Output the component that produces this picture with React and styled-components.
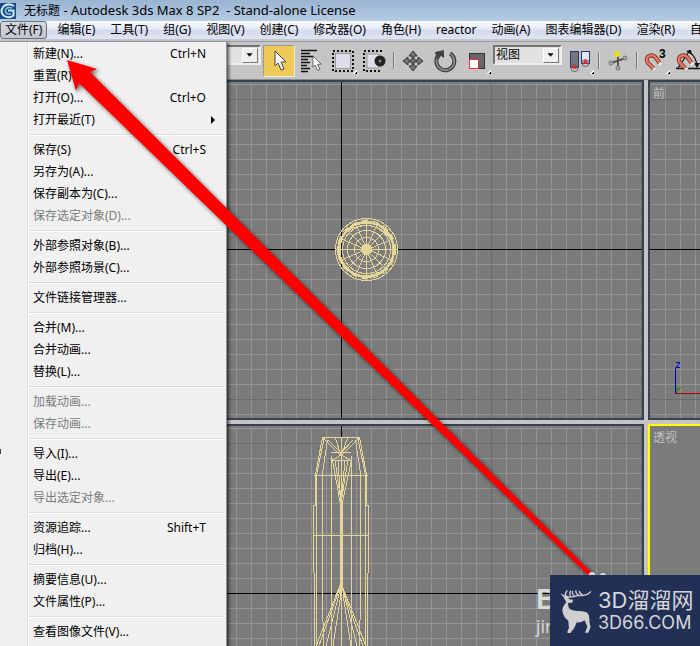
import styled, { createGlobalStyle, css } from "styled-components";

const GlobalStyle = createGlobalStyle`
  * {
    box-sizing: border-box;
  }

  body {
    margin: 0;
    overflow: hidden;
    background: #c5c5c5;
    color: #000;
    font: 12px/16px "Noto Sans", "Noto Sans CJK SC", sans-serif;
  }

  button,
  select {
    padding: 0;
    border: 0;
    background: none;
    color: inherit;
    font: inherit;
  }
`;

let Window = styled.div`
  position: relative;
  display: flex;
  flex-direction: column;
  height: 100vh;
  overflow: hidden;
`;

let TitleBar = styled.header`
  display: flex;
  flex: none;
  align-items: center;
  gap: 8px;
  height: 21px;
  background: linear-gradient(#9ab3d0, #b5cce5);
  white-space: pre;
`;

let Title = styled.h1`
  margin: 0;
  font-size: 13px;
  font-weight: 400;
`;

let SceneName = styled.span`
  font-size: 12px;
`;

let MenuBar = styled.nav`
  display: flex;
  flex: none;
  gap: 1px;
  height: 20px;
  overflow: hidden;
  border-bottom: 2px solid #c3c7ce;
  background: linear-gradient(#fcfdff, #e3e8f4 45%, #d3daec 50%, #dee4f2);
`;

let MenuTitle = styled.button`
  flex: none;
  padding: 0 7px;
  line-height: 18px;
  white-space: nowrap;

  ${(props) =>
    props.$open &&
    css`
      padding: 0 4px;
      margin-right: 2px;
      border: 1px solid #6c7078;
      border-radius: 3px;
      background: linear-gradient(#d5d9e1, #c0c6d2);
      line-height: 16px;
    `}
`;

let ToolBar = styled.div`
  display: flex;
  flex: none;
  align-items: center;
  height: 39px;
  padding-left: 180px;
  border-top: 1px solid #9a9a9a;
  border-bottom: 1px solid #8c8c8c;
  background: #c5c5c5;
`;

let Tool = styled.button`
  position: relative;
  display: flex;
  flex: none;
  align-items: center;
  justify-content: center;
  width: 32px;
  height: 32px;

  ${(props) =>
    props.$active &&
    css`
      border: 1px solid;
      border-color: #999 #eee #eee #999;
      background: #efca59;
    `}

  ${(props) =>
    props.$flyout &&
    css`
      &::after {
        content: "";
        position: absolute;
        right: 2px;
        bottom: 3px;
        width: 4px;
        height: 4px;
        background: linear-gradient(135deg, transparent 45%, #fff 45%, #fff 65%, #000 65%);
      }
    `}
`;

let Divider = styled.span`
  flex: none;
  width: 2px;
  height: 17px;
  margin: 0 2px;
  border-left: 1px solid #777;
  border-right: 1px solid #ddd;
`;

let Combo = styled.label`
  display: flex;
  flex: none;
  align-self: flex-start;
  align-items: center;
  width: ${(props) => props.$width}px;
  height: 20px;
  margin: 3px 2px 0 0;
  padding-right: 1px;
  border: 2px solid;
  border-color: #737373 #efefef #efefef #737373;
  background: #e2e2e2;

  select {
    flex: 1;
    min-width: 0;
    appearance: none;
    padding-left: 1px;
    line-height: 16px;
  }

  svg {
    width: 16px;
    height: 15px;
    border: 1px solid;
    border-color: #fff #777 #777 #fff;
    background: #eee;
  }
`;

let Workspace = styled.main`
  display: grid;
  flex: 1;
  min-height: 0;
  grid-template-columns: minmax(0, 1fr) 52px;
  grid-template-rows: 340px minmax(0, 1fr);
  gap: 4px;
  background: #c5c3c6;
`;

let View = styled.section`
  position: relative;
  overflow: hidden;
  border: 2px solid #39424f;
  background: #7b7b7b;

  ${(props) =>
    props.$active &&
    css`
      border-color: #ff0;
    `}

  ${(props) => props.$right && "border-right: 0;"}
  ${(props) => props.$bottom && "border-bottom: 0;"}

  > svg {
    position: absolute;
    inset: 0;
    width: 100%;
    height: 100%;
  }
`;

let ViewName = styled.h2`
  position: relative;
  margin: 4px 3px;
  color: #c2c2c2;
  font-size: 12px;
  font-weight: 400;
`;

let Menu = styled.ul`
  position: absolute;
  top: 41px;
  left: 0;
  width: 227px;
  margin: 0;
  padding: 1px 2px 20px 0;
  border-top: 1px solid #949494;
  border-right: 1px solid #949494;
  background: linear-gradient(90deg, #f0f0f0 27px, #dedede 27px, #dedede 28px, #fff 28px, #fff 29px, #f0f0f0 29px);
  box-shadow: 2px 2px 3px rgba(0, 0, 0, 0.6);
  list-style: none;
`;

let MenuRule = styled.li`
  height: 2px;
  margin: 3px 0 3px 29px;
  border-top: 1px solid #dcdcdc;
  border-bottom: 1px solid #fff;
`;

let MenuItem = styled.button`
  display: flex;
  align-items: center;
  justify-content: space-between;
  width: 100%;
  height: 22px;
  padding: 0 18px 0 33px;
  white-space: nowrap;

  &:disabled {
    color: #7d7d7d;
  }
`;

let SubmenuMark = styled.svg`
  width: 4px;
  height: 8px;
  margin-right: -9px;
`;

let Notch = styled.li`
  position: absolute;
  top: 407px;
  left: 0;
  width: 1px;
  height: 5px;
  background: #444;
`;

let Arrow = styled.svg`
  position: absolute;
  top: 0;
  left: 0;
  width: 700px;
  height: 646px;
  pointer-events: none;
  filter: drop-shadow(2px 2px 2px rgba(0, 0, 0, 0.6));
`;

let Credit = styled.div`
  position: absolute;
  right: 74px;
  bottom: 8px;
  width: 90px;
  color: #d9d9d9;
  font: 18px/24px "Open Sans", sans-serif;
  white-space: nowrap;

  b {
    display: block;
    font: bold 29px/30px "Liberation Sans", sans-serif;
  }
`;

let Paws = styled.svg`
  position: absolute;
  right: 91px;
  bottom: 66px;
  width: 22px;
  height: 9px;
`;

let Brand = styled.aside`
  position: absolute;
  right: 0;
  bottom: 0;
  display: flex;
  align-items: center;
  gap: 6px;
  width: 150px;
  height: 71px;
  padding-left: 9px;
  background: #223056;
  color: #d6d6d8;

  svg {
    flex: none;
    width: 33px;
    height: 44px;
  }
`;

let BrandText = styled.div`
  font: 18px/22px Inter, sans-serif;
  white-space: nowrap;

  strong {
    display: block;
    font: 400 22px/24px Inter, "Noto Sans CJK SC", sans-serif;
  }
`;

const menuTitles = [
  "编辑(E)", "工具(T)", "组(G)", "视图(V)", "创建(C)", "修改器(O)", "角色(H)",
  "reactor", "动画(A)", "图表编辑器(D)", "渲染(R)", "自定义(U)",
];

const fileMenu = [
  [
    { label: "新建(N)...", keys: "Ctrl+N" },
    { label: "重置(R)" },
    { label: "打开(O)...", keys: "Ctrl+O" },
    { label: "打开最近(T)", submenu: true },
  ],
  [
    { label: "保存(S)", keys: "Ctrl+S" },
    { label: "另存为(A)..." },
    { label: "保存副本为(C)..." },
    { label: "保存选定对象(D)...", disabled: true },
  ],
  [{ label: "外部参照对象(B)..." }, { label: "外部参照场景(C)..." }],
  [{ label: "文件链接管理器..." }],
  [{ label: "合并(M)..." }, { label: "合并动画..." }, { label: "替换(L)..." }],
  [
    { label: "加载动画...", disabled: true },
    { label: "保存动画...", disabled: true },
  ],
  [
    { label: "导入(I)..." },
    { label: "导出(E)..." },
    { label: "导出选定对象...", disabled: true },
  ],
  [{ label: "资源追踪...", keys: "Shift+T" }, { label: "归档(H)..." }],
  [{ label: "摘要信息(U)..." }, { label: "文件属性(P)..." }],
  [{ label: "查看图像文件(V)..." }],
];

function AppIcon() {
  return (
    <svg width="16" height="16" viewBox="0 0 16 16" aria-hidden="true">
      <rect width="16" height="16" fill="#174a86" />
      <path d="M14 3Q8-.5 3.500 3.500q-4 5 0 9Q9 16 13.500 12.500V7.500H8" fill="none" stroke="#cfeaf8" strokeWidth="2" />
      <path d="M12 5Q7 3.500 5.500 6.500 5 10 8 11h3" fill="none" stroke="#8fc4e4" strokeWidth="1.500" />
    </svg>
  );
}

function Cursor({ x = 0, y = 0, scale = 1 }) {
  return (
    <path
      transform={`translate(${x} ${y}) scale(${scale})`}
      d="M0 0v15l3-3 3 7 3-1-3-7h5z"
      fill="#fff"
      stroke="#444"
      strokeWidth="1"
    />
  );
}

function SelectIcon() {
  return (
    <svg width="24" height="24" viewBox="0 0 24 24">
      <Cursor x={8} y={2} />
    </svg>
  );
}

function ListIcon() {
  return (
    <svg width="24" height="24" viewBox="0 0 24 24">
      <path d="M2 1.500h16M2 4.500h9M2 7.500h12M2 10.500h7M2 13.500h9M2 16.500h6M2 19.500h9M2 22.500h7" stroke="#111" strokeWidth="1.500" />
      <Cursor x={14} y={7} scale={0.75} />
    </svg>
  );
}

function RegionIcon() {
  return (
    <svg width="24" height="24" viewBox="0 0 24 24">
      <rect x="4.500" y="4.500" width="15" height="15" fill="#dedeea" stroke="#999" />
      <rect x="2" y="2" width="20" height="20" fill="none" stroke="#111" strokeWidth="2" strokeDasharray="2 2" />
    </svg>
  );
}

function WindowIcon() {
  return (
    <svg width="26" height="24" viewBox="0 0 26 24">
      <path d="M5 5h12v14H5z" fill="#dedeea" stroke="#999" />
      <path d="M20 2H2v20h18" fill="none" stroke="#111" strokeWidth="2" strokeDasharray="2 2" />
      <circle cx="18" cy="12" r="5.500" fill="#222" />
      <circle cx="18" cy="12" r="1.500" fill="#888" />
    </svg>
  );
}

function MoveIcon() {
  return (
    <svg width="22" height="22" viewBox="0 0 22 22">
      <path d="M11 1l4 5h-3v4h4V7l5 4-5 4v-3h-4v4h3l-4 5-4-5h3v-4H6v3l-5-4 5-4v3h4V6H7z" fill="#77777d" stroke="#333" />
    </svg>
  );
}

function RotateIcon() {
  return (
    <svg width="24" height="24" viewBox="0 0 24 24">
      <path d="M17 4.500A9 9 0 1 1 5 7" fill="none" stroke="#333" strokeWidth="4" />
      <path d="M17 4.500A9 9 0 1 1 5 7" fill="none" stroke="#88888e" strokeWidth="2" />
      <path d="M2 3l9-2v8L8 7l-4 4z" fill="#444" />
    </svg>
  );
}

function ScaleIcon() {
  return (
    <svg width="18" height="18" viewBox="0 0 18 18">
      <rect x="1.500" y="1.500" width="15" height="15" fill="#66666b" stroke="#333" />
      <rect x="1.500" y="7.500" width="9" height="9" fill="#fff" stroke="#e33" />
    </svg>
  );
}

function PivotIcon() {
  return (
    <svg width="24" height="24" viewBox="0 0 24 24">
      <rect x="2.500" y="2.500" width="8" height="16" fill="#74747c" stroke="#293772" />
      <rect x="13.500" y="2.500" width="8" height="12" fill="#e5e5f4" stroke="#293772" />
      <circle cx="6.500" cy="19" r="3.500" fill="none" stroke="#666" />
      <circle cx="17.500" cy="14" r="3.500" fill="none" stroke="#666" />
      <circle cx="6.500" cy="18" r="2" fill="#e22" />
      <circle cx="17.500" cy="13" r="2" fill="#e22" />
    </svg>
  );
}

function ManipulateIcon() {
  return (
    <svg width="22" height="22" viewBox="0 0 22 22">
      <path d="M11 4v15M4 13l15-5" stroke="#555" strokeWidth="2" />
      <circle cx="10" cy="4" r="3" fill="#e8dc25" />
      <g fill="#aaa" stroke="#777">
        <circle cx="4" cy="13" r="2" />
        <circle cx="18" cy="8" r="2" />
        <circle cx="11" cy="18" r="2" />
      </g>
    </svg>
  );
}

function Magnet() {
  return (
    <g fill="none">
      <path d="M11 21L4 14Q1 9 5 7t7 2l5 7" stroke="#6d2b23" strokeWidth="4" />
      <path d="M11 21L4 14Q1 9 5 7t7 2l5 7" stroke="#ed7561" strokeWidth="2.500" />
      <path d="M11 21l-1.500-1.500M17 16l-1.500-2" stroke="#eee" strokeWidth="4" />
    </g>
  );
}

function SnapIcon() {
  return (
    <svg width="24" height="24" viewBox="0 0 24 24">
      <Magnet />
      <text x="15" y="9" fontSize="12" fontWeight="700" fontFamily="Liberation Sans, sans-serif">3</text>
    </svg>
  );
}

function AngleIcon() {
  return (
    <svg width="24" height="24" viewBox="0 0 24 24">
      <path d="M0 19.500h24M2 19L14 1M13 3q7 4 8 14" fill="none" stroke="#111" strokeWidth="1.300" />
      <path d="M10 2l5-1 1 5zM18 14h6l-3 5z" fill="#111" />
      <Magnet />
    </svg>
  );
}

function ComboBox({ label, options, width }) {
  return (
    <Combo $width={width}>
      <select aria-label={label}>
        {options.map((option) => (
          <option key={option}>{option}</option>
        ))}
      </select>
      <svg viewBox="0 0 16 15" aria-hidden="true">
        <path d="M4 5h7L7.500 9z" />
      </svg>
    </Combo>
  );
}

// x and y are where the world axes cross, in pixels inside the viewport
function Grid({ id, x, y, axisX = true, axisY = true }) {
  return (
    <>
      <defs>
        <pattern id={id} x={x} y={y} width="15" height="15" patternUnits="userSpaceOnUse">
          <path d="M.5 0v15M0 .5h15" stroke="#949494" />
        </pattern>
        <pattern id={id + "-major"} x={x} y={y} width="150" height="150" patternUnits="userSpaceOnUse">
          <path d="M.5 0v150M0 .5h150" stroke="#6b6b6b" />
        </pattern>
      </defs>
      <rect x="1" y="1" width="100%" height="100%" fill={`url(#${id})`} />
      <rect x="1" y="1" width="100%" height="100%" fill={`url(#${id}-major)`} />
      {axisX && <rect y={y} width="100%" height="1" />}
      {axisY && <rect x={x} width="1" height="100%" />}
    </>
  );
}

function TopWireframe() {
  const spokes = Array.from({ length: 16 }, (_, i) => i * 22.5);
  return (
    <g transform="translate(364.500 167.500)" fill="none" stroke="#e3d698" shapeRendering="crispEdges">
      {[31, 28, 24, 19, 12, 5].map((r) => (
        <circle key={r} r={r} />
      ))}
      <circle r="27" strokeWidth="2" />
      <ellipse cx="-1" cy="1" rx="28" ry="25" />
      <circle r="5" fill="#e3d698" />
      {spokes.map((angle) => (
        <path key={angle} d="M0 0H27" transform={`rotate(${angle})`} />
      ))}
      <path d="M-31 0h62M0-31v62" />
      <circle r="29" strokeDasharray="6 5" />
    </g>
  );
}

function FrontWireframe() {
  return (
    <g transform="translate(-2 -426)" fill="none" stroke="#e3d698" shapeRendering="crispEdges">
      <path d="M322 437.500h38M314 475.500h54M313 535.500h56" />
      <path d="M322.500 437l-7 38v30l-2 1v66l1 2v80M324.500 437l-8 38v170" />
      <path d="M359.500 437l7 38v30l2 1v66l-1 2v80M357.500 437l8 38v171" />
      <path d="M327.500 440l-5 33v118l1 60M331.500 456v190M341.500 437v209M351.500 456v190M355.500 440l5 33v118l-1 60" />
      <path d="M323 438l18 18 18-18M335 437l6 19 7-19M328 440l13 13 12-13M331 452h20M332 460.500h19M331 461l10-6 11 6" />
      <path d="M332.500 460l8 45v90M335 460l6 42M338 460l3 45M345 460l-4 45M348 460l-7 43M351.500 460l-9 42v85" />
      <path d="M340.500 515v75M342.500 520v62" />
      <path d="M341 583l-25 63M341 585l-23 63M340 590l-14 56M341 594l-8 52M341 583l25 63M341 585l22 61M343 590l14 56M343 594l8 52" />
    </g>
  );
}

function Deer() {
  return (
    <svg viewBox="116 117 100 134" aria-hidden="true">
      <path d="M128 139q-7-3-5-9 3 4 9 6l12 2 2 10 12 2-1 8-13 2q-2 12 5 19 7 4 24 5 24-1 31 8 6 8 4 25l4 16-7 17h-10l7-18-8-20q-11 8-25 7-3 12-10 21l-7 9-1 9h-10l1-14 4-8-2-23q-15-9-18-30-1-11 12-26z" fill="#cfcfcf" />
      <path d="M136 138q-3-8 5-17M141 142q18 0 32-5 28 2 40-13M151 140q-5-9 0-18M163 139q-10-8-5-16M176 136q-12-7-8-15M187 134q-10-4-9-11" fill="none" stroke="#cfcfcf" strokeWidth="4" />
    </svg>
  );
}

function FileMenu() {
  return (
    <Menu>
      {fileMenu.map((group, i) => [
        i > 0 && <MenuRule key={"rule" + i} role="separator" />,
        ...group.map((item) => (
          <li key={item.label}>
            <MenuItem disabled={item.disabled}>
              <span>{item.label}</span>
              {item.keys && <span>{item.keys}</span>}
              {item.submenu && (
                <SubmenuMark viewBox="0 0 4 8">
                  <path d="M0 0l4 4-4 4z" />
                </SubmenuMark>
              )}
            </MenuItem>
          </li>
        )),
      ])}
      <Notch role="presentation" />
    </Menu>
  );
}

export default function App() {
  return (
    <Window>
      <GlobalStyle />
      <TitleBar>
        <AppIcon />
        <Title>
          <SceneName>无标题</SceneName>
          {" - Autodesk 3ds Max 8 SP2  - Stand-alone License"}
        </Title>
      </TitleBar>
      <MenuBar>
        <MenuTitle $open>文件(F)</MenuTitle>
        {menuTitles.map((title) => (
          <MenuTitle key={title}>{title}</MenuTitle>
        ))}
      </MenuBar>
      <ToolBar>
        <ComboBox label="选择过滤器" options={[""]} width={81} />
        <Tool $active aria-label="选择对象"><SelectIcon /></Tool>
        <Tool aria-label="按名称选择"><ListIcon /></Tool>
        <Tool $flyout aria-label="矩形选择区域"><RegionIcon /></Tool>
        <Tool aria-label="窗口/交叉"><WindowIcon /></Tool>
        <Divider />
        <Tool aria-label="选择并移动"><MoveIcon /></Tool>
        <Tool aria-label="选择并旋转"><RotateIcon /></Tool>
        <Tool $flyout aria-label="选择并缩放"><ScaleIcon /></Tool>
        <ComboBox label="参考坐标系" options={["视图"]} width={69} />
        <Tool $flyout aria-label="使用轴点中心"><PivotIcon /></Tool>
        <Divider />
        <Tool aria-label="选择并操纵"><ManipulateIcon /></Tool>
        <Divider />
        <Tool $flyout aria-label="捕捉开关"><SnapIcon /></Tool>
        <Tool aria-label="角度捕捉切换"><AngleIcon /></Tool>
      </ToolBar>
      <Workspace>
        <View>
          <svg aria-hidden="true">
            <Grid id="top" x={339} y={167} />
            <TopWireframe />
          </svg>
        </View>
        <View $right>
          <svg aria-hidden="true">
            <Grid id="front" x={75} y={167} axisY={false} />
            <path d="M25.500 286v26" stroke="#0000b4" />
            <path d="M25 311.500h40" stroke="#b40000" />
            <path d="M26 280.500h4l-4 5h4" fill="none" stroke="#0000d0" />
            <path d="M26 305l2 3 3-3M28 308l-2 3" fill="none" stroke="#009800" />
          </svg>
          <ViewName>前</ViewName>
        </View>
        <View $bottom>
          <svg aria-hidden="true">
            <Grid id="left" x={339} y={167} />
            <FrontWireframe />
          </svg>
        </View>
        <View $active $right $bottom>
          <ViewName>透视</ViewName>
        </View>
      </Workspace>
      <FileMenu />
      <Credit><b>Bai</b>jingyan</Credit>
      <Arrow viewBox="0 0 700 646" aria-hidden="true">
        <path d="M67 60l30 9-7 3 503 502-5 1L79 83l-3 8z" fill="#f00" />
      </Arrow>
      <Paws viewBox="0 0 22 9" aria-hidden="true">
        <ellipse cx="5" cy="6" rx="4" ry="5" fill="#d9d9d9" />
        <ellipse cx="16" cy="7" rx="4" ry="5" fill="#d9d9d9" />
      </Paws>
      <Brand>
        <Deer />
        <BrandText>
          <strong>3D溜溜网</strong>
          3D66.COM
        </BrandText>
      </Brand>
    </Window>
  );
}
